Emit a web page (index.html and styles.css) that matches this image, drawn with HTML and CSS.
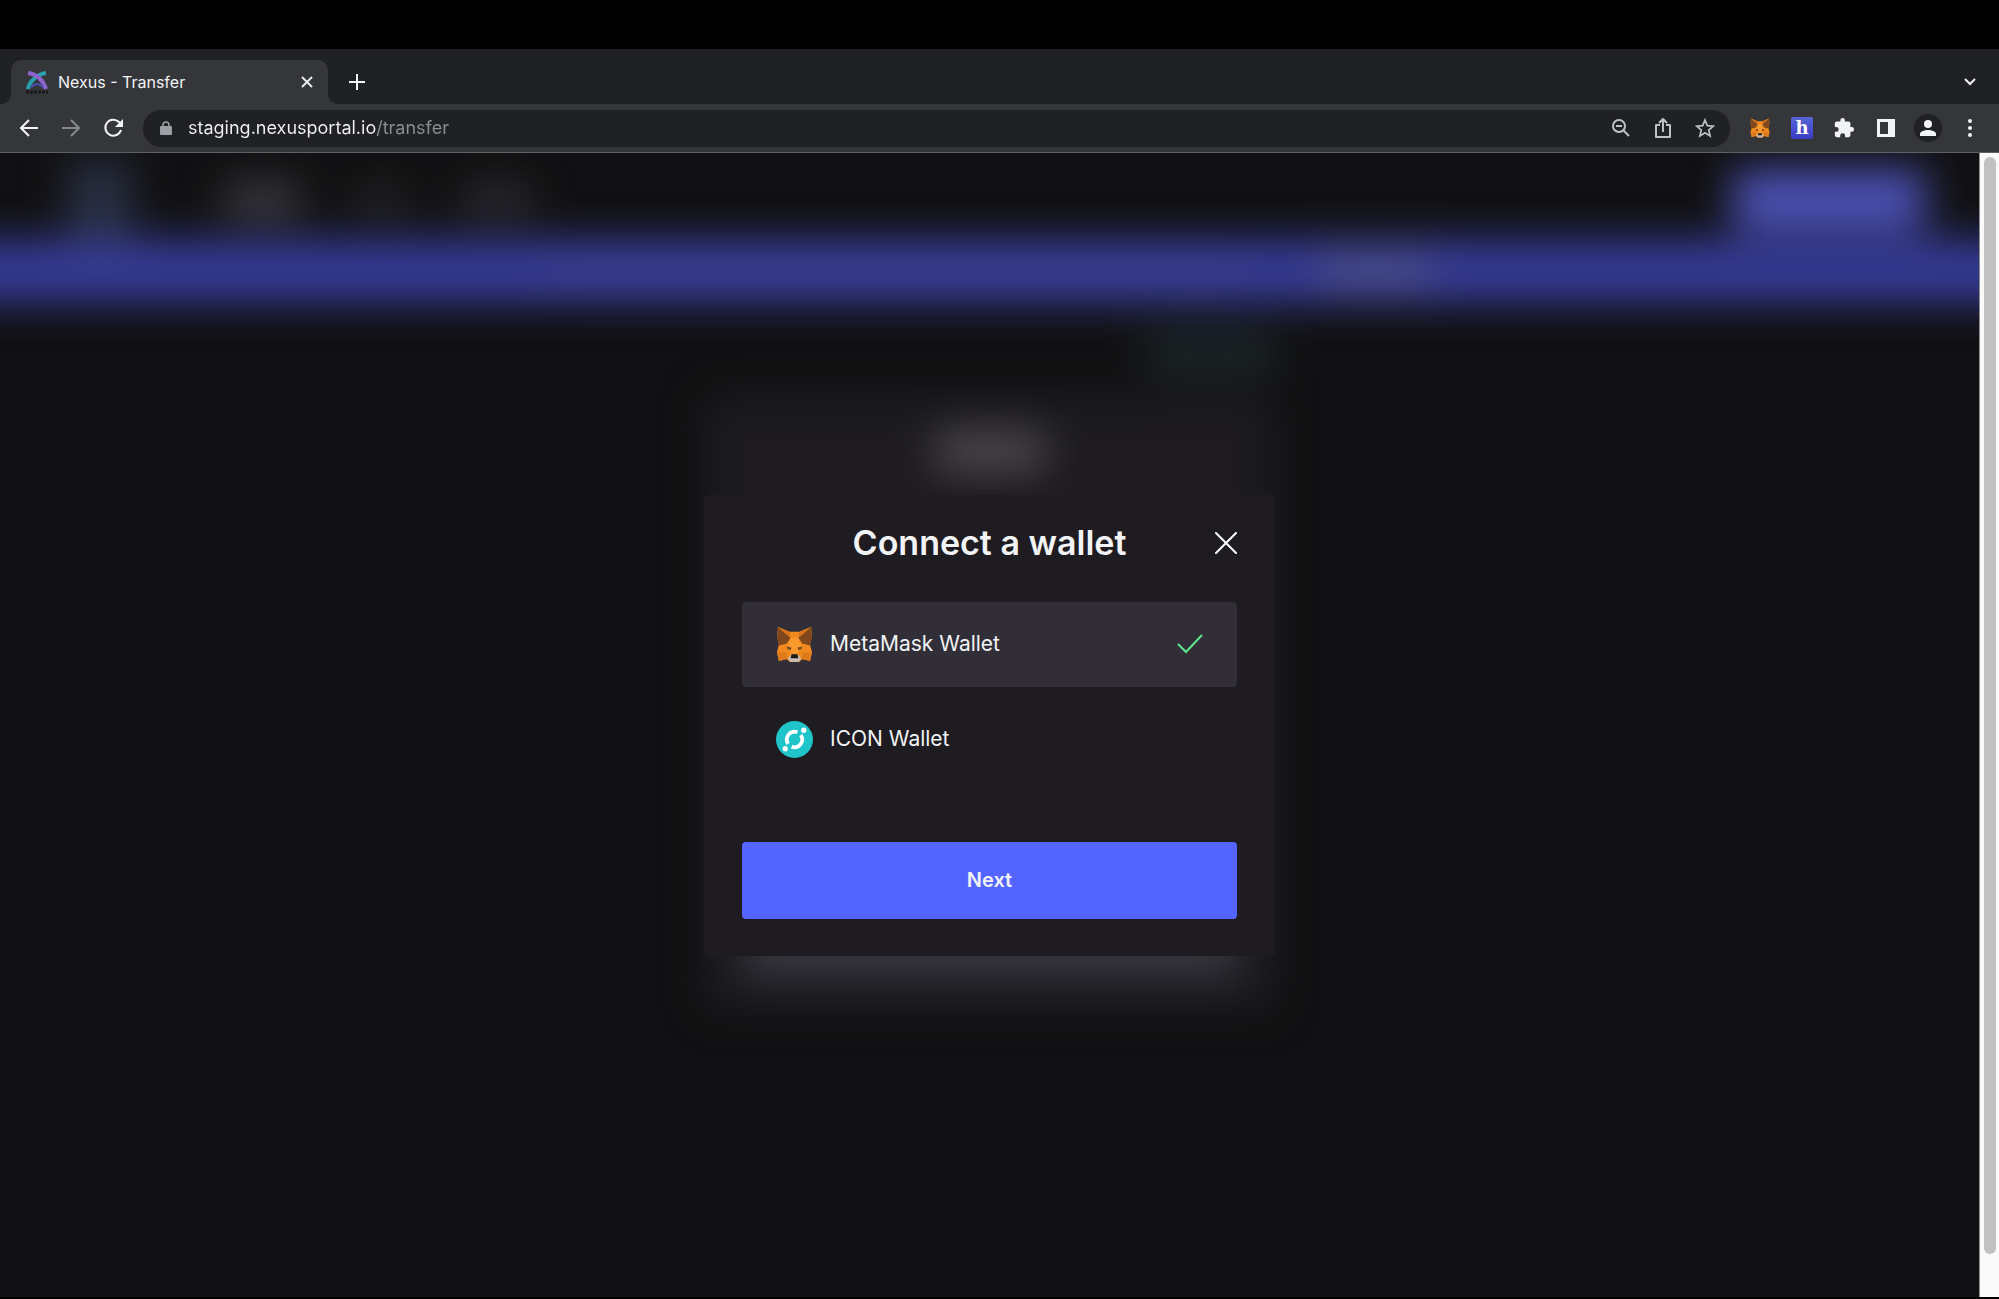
FILE: index.html
```html
<!DOCTYPE html>
<html lang="en">
<head>
<meta charset="utf-8">
<title>Nexus - Transfer</title>
<link rel="stylesheet" href="styles.css">
</head>
<body>
<svg class="sprite" aria-hidden="true">
  <symbol id="fox" viewBox="0 0 38 38">
    <path fill="#f08a1e" d="M2 1 14 6h10L36 1l1 9-2 9 2 8-2 9-8-2-3 3H14l-3-3-8 2-2-9 2-8-2-9z"/>
    <path fill="#80481c" d="M2 1 15 12l-4 6-8 2-2-9zM36 1 23 12l4 6 8 2 2-9z"/>
    <path fill="#d9731a" d="m2 1 12 5 1 6zM36 1 24 6l-1 6z"/>
    <path fill="#de7a1c" d="M1 27h10l1 7-9 2zM37 27H27l-1 7 9 2z"/>
    <path fill="#fb9a2c" d="M15 12h8l3 9-4 7h-6l-4-7z"/>
    <path fill="#7a4a26" d="m11 21 5 1-1 3-3-1zM27 21l-5 1 1 3 3-1z"/>
    <path fill="#c9bcb2" d="m12 33 4-4h6l4 4-3 4h-8z"/>
    <path fill="#1c1715" d="M16 29h6l1 4h-8z"/>
  </symbol>
</svg>

<div class="browser">
  <header class="tabstrip">
    <div class="tab">
      <svg class="favicon" viewBox="0 0 24 24" aria-hidden="true">
        <path d="M3 19C4 12 12 4 21 3" fill="none" stroke="#2aa0ae" stroke-width="4"/>
        <path d="M3 3c9 1 15 7 18 16" fill="none" stroke="#8d63cf" stroke-width="4"/>
        <path d="M6 17q6-6 12 0" fill="none" stroke="#4a4fb4" stroke-width="2"/>
        <path d="M1 22h22" stroke="#17181a" stroke-width="3" stroke-dasharray="3 1"/>
      </svg>
      <span class="tab-title">Nexus - Transfer</span>
      <button class="icon-btn tab-close" aria-label="Close tab"><svg width="12" height="12" viewBox="0 0 12 12"><path d="m1 1 10 10M11 1 1 11" stroke="#e8eaed" stroke-width="2"/></svg></button>
    </div>
    <button class="icon-btn" aria-label="New tab"><svg width="16" height="16" viewBox="0 0 16 16"><path d="M8 0v16M0 8h16" stroke="#f1f3f4" stroke-width="2"/></svg></button>
    <button class="icon-btn tab-search" aria-label="Search tabs"><svg width="12" height="8" viewBox="0 0 12 8"><path d="m1 1 5 5 5-5" fill="none" stroke="#f1f3f4" stroke-width="2"/></svg></button>
  </header>

  <nav class="toolbar" aria-label="Browser toolbar">
    <button class="icon-btn" aria-label="Back"><svg width="18" height="18" viewBox="0 0 18 18"><path d="M18 9H2M9 1 1 9l8 8" fill="none" stroke="#f1f3f4" stroke-width="2"/></svg></button>
    <button class="icon-btn" aria-label="Forward"><svg width="18" height="18" viewBox="0 0 18 18"><path d="M0 9h16M9 1l8 8-8 8" fill="none" stroke="#85878b" stroke-width="2"/></svg></button>
    <button class="icon-btn" aria-label="Reload"><svg width="20" height="20" viewBox="0 0 20 20"><path d="M18 12a8 8 0 1 1-2-8l2 2" fill="none" stroke="#f1f3f4" stroke-width="2"/><path d="M20 1v8h-8z" fill="#f1f3f4"/></svg></button>
    <div class="omnibox">
      <svg class="lock" width="12" height="14" viewBox="0 0 12 14" aria-hidden="true"><path d="M3 7V4a3 3 0 0 1 6 0v3" fill="none" stroke="#9aa0a6" stroke-width="1.500"/><rect y="5" width="12" height="9" rx="1" fill="#9aa0a6"/></svg>
      <input class="url" type="text" aria-label="Address" value="staging.nexusportal.io/transfer">
      <button class="icon-btn" aria-label="Zoom out"><svg width="20" height="20" viewBox="0 0 20 20"><g fill="none" stroke="#bdc1c6" stroke-width="2"><circle cx="8" cy="8" r="6"/><path d="m12 12 6 6M5 8h6"/></g></svg></button>
      <button class="icon-btn" aria-label="Share"><svg width="20" height="20" viewBox="0 0 20 20"><path d="M7 7H3v12h14V7h-4M10 14V2M6 5l4-4 4 4" fill="none" stroke="#bdc1c6" stroke-width="2" stroke-linejoin="round"/></svg></button>
      <button class="icon-btn" aria-label="Bookmark"><svg width="20" height="20" viewBox="0 0 20 20"><path d="m10 2 2.300 5.600 6 .5-4.600 3.900 1.400 5.900-5.100-3.200-5.100 3.200 1.400-5.900-4.600-3.900 6-.5z" fill="none" stroke="#bdc1c6" stroke-width="1.700"/></svg></button>
    </div>
    <button class="icon-btn" aria-label="MetaMask"><svg width="22" height="20"><use href="#fox"/></svg></button>
    <button class="icon-btn" aria-label="Extension"><span class="h-badge">h</span></button>
    <button class="icon-btn" aria-label="Extensions"><svg width="22" height="22" viewBox="0 0 24 24"><path fill="#f1f3f4" d="M20.500 11H19V7a2 2 0 0 0-2-2h-4V3.500a2.500 2.500 0 0 0-5 0V5H4a2 2 0 0 0-2 2v3.800h1.500a2.700 2.700 0 0 1 0 5.400H2V20a2 2 0 0 0 2 2h3.800v-1.500a2.700 2.700 0 0 1 5.400 0V22H17a2 2 0 0 0 2-2v-4h1.500a2.500 2.500 0 0 0 0-5z"/></svg></button>
    <button class="icon-btn" aria-label="Side panel"><svg width="18" height="18" viewBox="0 0 18 18"><path fill="#f1f3f4" fill-rule="evenodd" d="M0 0h18v18H0zM3 3v12h8V3z"/></svg></button>
    <button class="icon-btn" aria-label="Profile"><svg width="28" height="28" viewBox="0 0 28 28"><circle cx="14" cy="14" r="14" fill="#202124"/><circle cx="14" cy="10" r="4" fill="#f1f3f4"/><path d="M6 22v-2c0-3 5-4 8-4s8 1 8 4v2z" fill="#f1f3f4"/></svg></button>
    <button class="icon-btn" aria-label="Menu"><svg width="4" height="18" viewBox="0 0 4 18" fill="#f1f3f4"><circle cx="2" cy="2" r="2"/><circle cx="2" cy="9" r="2"/><circle cx="2" cy="16" r="2"/></svg></button>
  </nav>

  <div class="viewport">
    <main class="page">
      <div class="backdrop-page" aria-hidden="true">
        <div class="site-header">
          <div class="site-logo"></div>
          <div class="site-link site-link-active"></div>
          <div class="site-link"></div>
          <div class="site-link site-link-wide"></div>
          <div class="site-connect"></div>
        </div>
        <div class="site-banner"><div class="banner-text"></div><div class="banner-link"></div></div>
        <div class="site-body">
          <div class="site-status"></div>
          <div class="site-card"><div class="card-title"></div><div class="card-action"></div></div>
        </div>
      </div>

      <div class="overlay">
        <form class="modal" role="dialog" aria-labelledby="modal-title">
          <div class="modal-head">
            <h1 class="modal-title" id="modal-title">Connect a wallet</h1>
            <button class="modal-close" type="button" aria-label="Close"><svg width="22" height="22" viewBox="0 0 22 22"><path d="m1 1 20 20M21 1 1 21" stroke="#fff" stroke-width="2" stroke-linecap="round"/></svg></button>
          </div>
          <div class="wallets">
            <button class="wallet wallet-selected" type="button" aria-pressed="true">
              <svg width="37" height="37" aria-hidden="true"><use href="#fox"/></svg>
              <span class="wallet-name">MetaMask Wallet</span>
              <svg width="26" height="20" viewBox="0 0 26 20" aria-hidden="true"><path d="m1 10 8 8L25 1" fill="none" stroke="#5ee78c" stroke-width="2"/></svg>
            </button>
            <button class="wallet" type="button" aria-pressed="false">
              <svg width="37" height="37" viewBox="0 0 38 38" aria-hidden="true"><circle cx="19" cy="19" r="19" fill="#1fc5c9"/><g fill="none" stroke="#fff" stroke-width="3.800"><path d="M12.500 23.500A8 8 0 0 1 22 11.600"/><path d="M25.500 14.500A8 8 0 0 1 16 26.400"/></g><circle cx="28.500" cy="9.500" r="2.700" fill="#fff"/><circle cx="9.500" cy="28.500" r="2.700" fill="#fff"/></svg>
              <span class="wallet-name">ICON Wallet</span>
            </button>
          </div>
          <button class="next" type="button">Next</button>
        </form>
      </div>
    </main>
    <div class="scrollbar" aria-hidden="true"><div class="thumb"></div></div>
  </div>
</div>
</body>
</html>
```
FILE: styles.css
```css
* { box-sizing: border-box; }

body {
  margin: 0;
  min-height: 100vh;
  padding: 49px 0 2px;
  display: flex;
  flex-direction: column;
  background: #000;
  color: #f1f3f4;
  font-family: Inter, "Liberation Sans", sans-serif;
}

button {
  border: 0;
  padding: 0;
  background: none;
  color: inherit;
  font: inherit;
  cursor: pointer;
}

svg { display: block; flex: none; }
.sprite { position: absolute; width: 0; height: 0; }

.browser {
  flex: 1;
  display: flex;
  flex-direction: column;
}

.icon-btn {
  flex: none;
  width: 42px;
  height: 36px;
  display: grid;
  place-items: center;
}

/* Tab strip */
.tabstrip {
  height: 55px;
  padding: 11px 8px 0 11px;
  display: flex;
  align-items: center;
  gap: 8px;
  background: #202124;
}

.tab {
  position: relative;
  width: 317px;
  height: 44px;
  padding: 0 0 0 14px;
  display: flex;
  align-items: center;
  gap: 9px;
  border-radius: 10px 10px 0 0;
  background: #35363a;
}

.tab::before,
.tab::after {
  content: "";
  position: absolute;
  bottom: 0;
  width: 10px;
  height: 10px;
}
.tab::before { right: 100%; background: radial-gradient(circle at 0 0, transparent 10px, #35363a 10px); }
.tab::after { left: 100%; background: radial-gradient(circle at 100% 0, transparent 10px, #35363a 10px); }

.favicon { width: 24px; height: 24px; }
.tab-title { flex: 1; font-size: 16px; line-height: 24px; }
.tab-search { margin-left: auto; }

/* Toolbar */
.toolbar {
  height: 49px;
  padding: 0 8px;
  display: flex;
  align-items: center;
  background: #35363a;
  border-bottom: 1px solid #5f6063;
}

.omnibox {
  flex: 1;
  height: 37px;
  margin: 0 9px;
  padding: 0 4px 0 17px;
  display: flex;
  align-items: center;
  border-radius: 18px;
  background: #202124;
}

.url {
  flex: 1;
  min-width: 0;
  margin-left: 16px;
  padding: 0;
  border: 0;
  outline: 0;
  font: 18px/28px Inter, "Liberation Sans", sans-serif;
  color: transparent;
  background: linear-gradient(90deg, #f1f3f4 188px, #8b8e92 188px);
  -webkit-background-clip: text;
  background-clip: text;
}

.h-badge {
  width: 22px;
  height: 22px;
  border-radius: 2px;
  background: linear-gradient(#5766d6, #3a3cc4);
  color: #fff;
  font: bold 18px/22px "DejaVu Serif", serif;
}

/* Page area */
.viewport { flex: 1; display: flex; }

.page {
  position: relative;
  flex: 1;
  overflow: hidden;
  background: #111113;
}

.scrollbar {
  width: 20px;
  padding: 4px 3px 43px 4px;
  display: flex;
  background: #fafafa;
  border-left: 1px solid #8c8c8c;
}
.thumb { flex: 1; border-radius: 6px; background: #c1c1c1; }

/* The site behind the dialog, out of focus */
.backdrop-page { filter: blur(20px); }

.site-header {
  height: 87px;
  padding: 6px 54px 0 68px;
  display: flex;
  align-items: center;
  gap: 54px;
}
.site-logo { width: 64px; height: 80px; margin-right: 38px; background: #293043; }
.site-link { width: 54px; height: 24px; background: #29282c; }
.site-link-active { width: 76px; height: 34px; background: #3f3d43; }
.site-link-wide { width: 70px; height: 28px; background: #312f35; }
.site-connect { width: 192px; height: 60px; margin-left: auto; background: #4c52b6; }

.site-banner {
  height: 62px;
  margin: 0 -60px;
  display: flex;
  align-items: center;
  justify-content: center;
  gap: 70px;
  background: #363b98;
}
.banner-text { width: 700px; height: 20px; background: #3f4498; }
.banner-link { width: 110px; height: 28px; background: #51558f; }

.site-body {
  width: 570px;
  margin: 0 auto;
  padding-top: 28px;
}
.site-status { width: 130px; height: 46px; margin: 0 0 20px auto; background: #1b2427; }
.site-card {
  height: 612px;
  padding: 33px 38px 30px;
  display: flex;
  flex-direction: column;
  align-items: center;
  justify-content: space-between;
  background: #1d1b20;
}
.card-title { width: 110px; height: 44px; background: #4a474c; }
.card-action { width: 100%; height: 78px; background: #37353e; }

.overlay {
  position: absolute;
  inset: 0;
  display: grid;
  place-items: center;
}

/* Wallet dialog */
.modal {
  width: 571px;
  max-width: 100%;
  padding: 30px 38px 37px;
  display: flex;
  flex-direction: column;
  border-radius: 4px;
  background: #1e1b21;
}

.modal-head {
  display: grid;
  grid-template-columns: 22px 1fr 22px;
  align-items: center;
  margin-bottom: 41px;
}
.modal-title {
  grid-column: 2;
  margin: 0;
  font-size: 34px;
  font-weight: 600;
  line-height: 36px;
  text-align: center;
}

.wallets { display: grid; gap: 10px; margin-bottom: 60px; }

.wallet {
  height: 85px;
  padding: 0 34px;
  display: flex;
  align-items: center;
  gap: 17px;
  border-radius: 4px;
  font-size: 21px;
  line-height: 30px;
  text-align: left;
}
.wallet-selected { background: #312e38; }
.wallet-name { flex: 1; }

.next {
  height: 77px;
  border-radius: 4px;
  background: #5465ff;
  font-size: 20px;
  font-weight: 600;
}
```
